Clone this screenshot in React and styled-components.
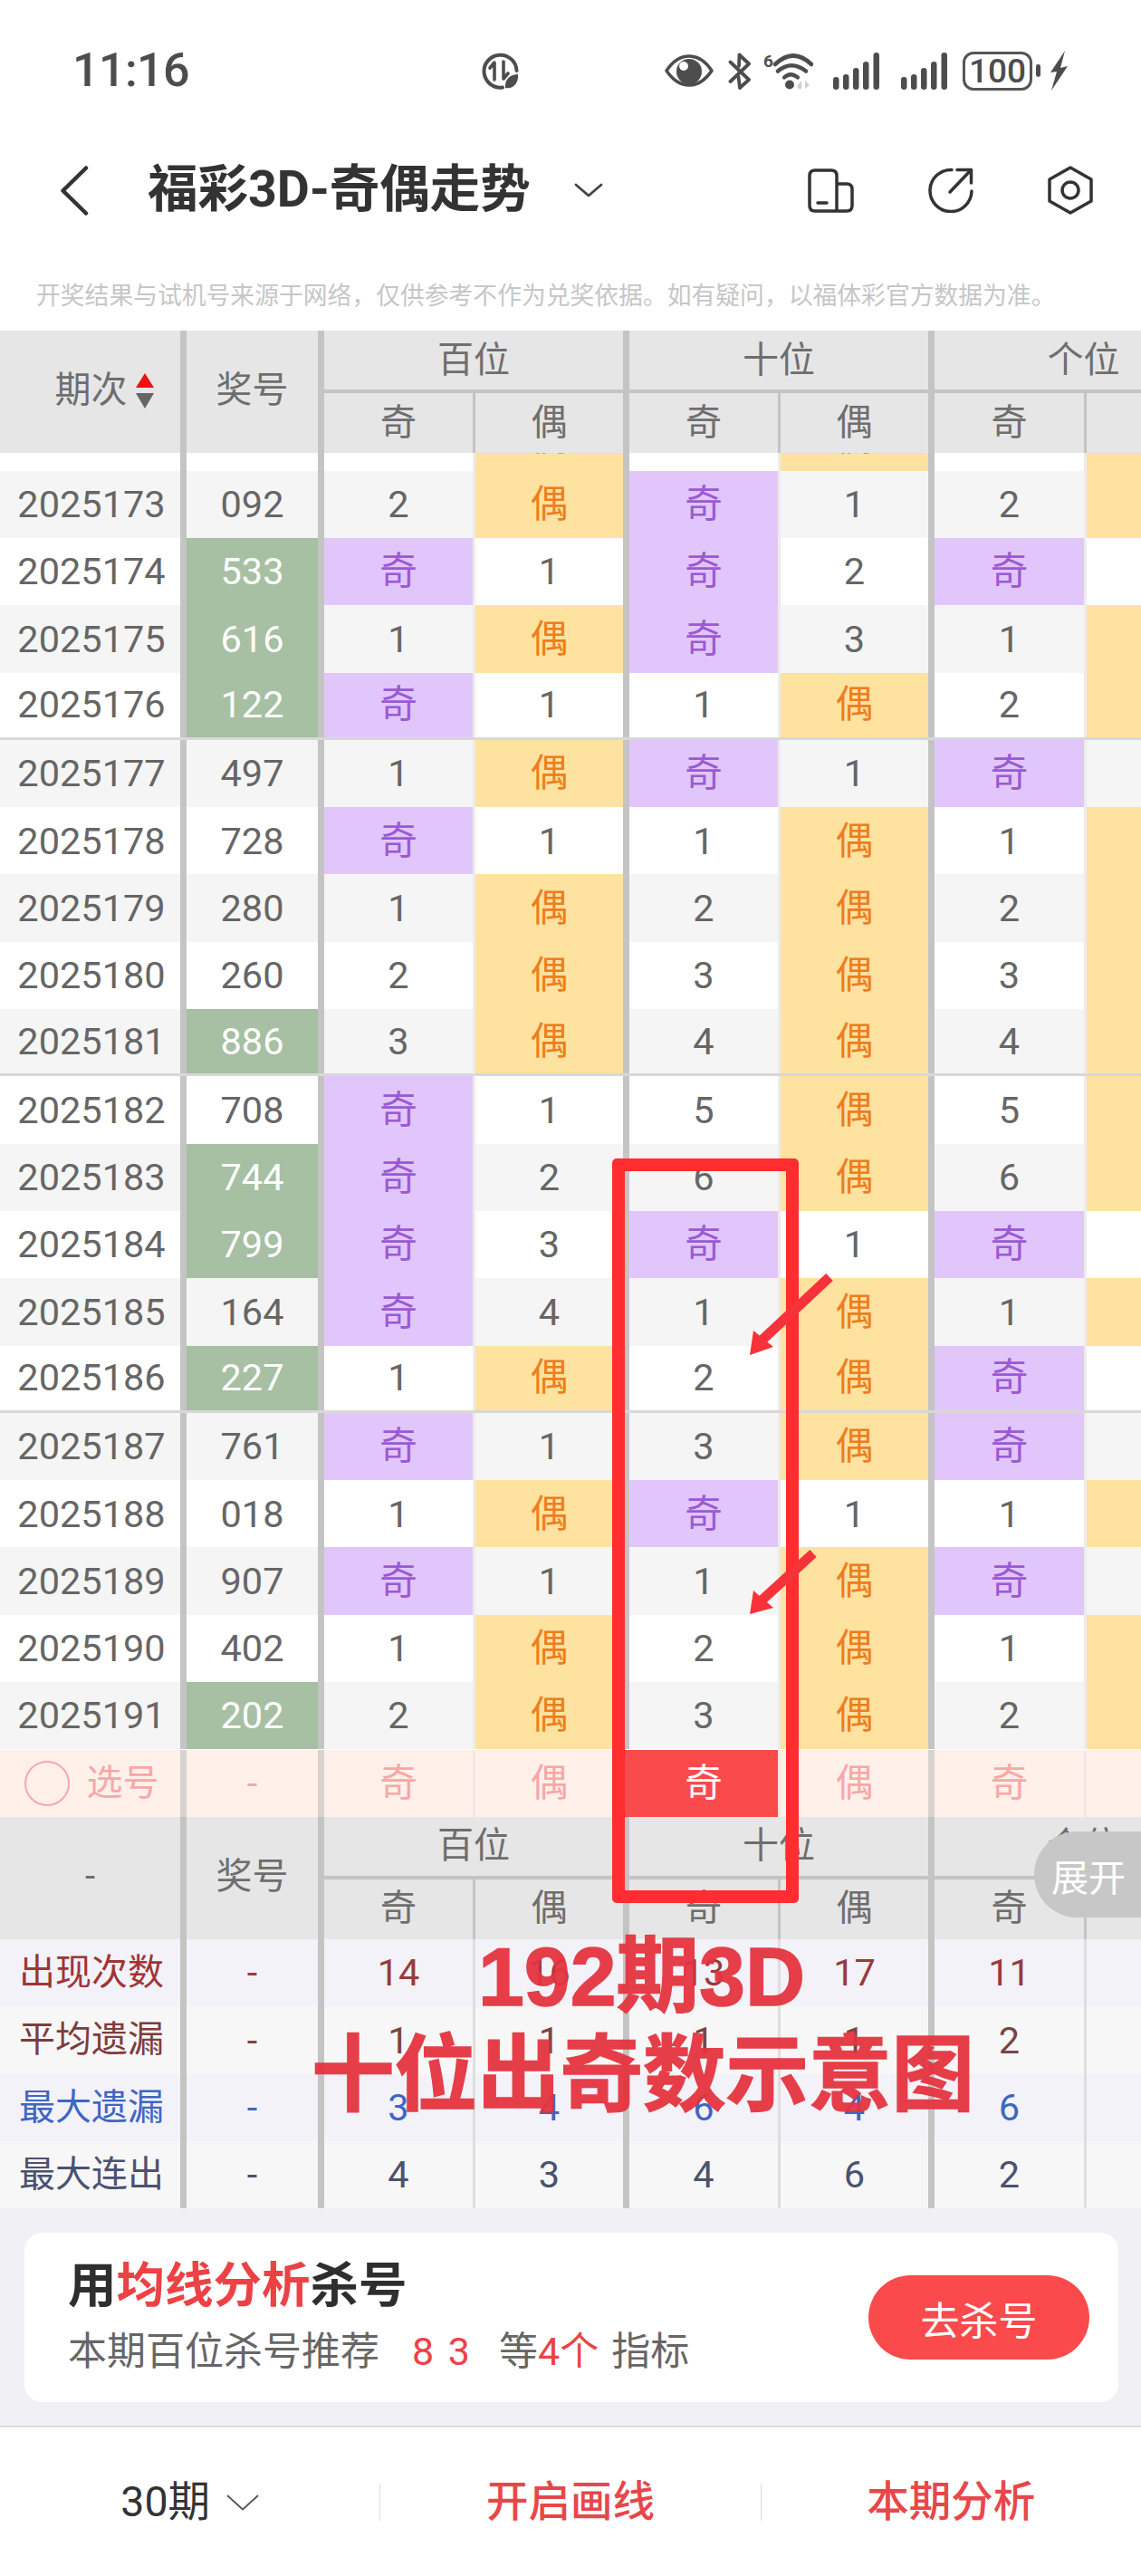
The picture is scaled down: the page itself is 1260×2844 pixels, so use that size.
import React from "react";
import styled, { createGlobalStyle, css } from "styled-components";

const FONT = `Roboto, "Noto Sans CJK SC", sans-serif`;
const THICK = "#c4c4c4";

const Global = createGlobalStyle`
  html, body { margin: 0; padding: 0; background: #fff; }
  * { box-sizing: border-box; }
`;

const Page = styled.div`
  position: relative;
  width: 1260px;
  height: 2844px;
  overflow: hidden;
  background: #fff;
  font-family: ${FONT};
`;

/* status bar */
const StatusBar = styled.div`
  height: 156px;
  display: flex;
  align-items: center;
  padding: 0 81px 0 80px;
  color: #4d4d4d;
`;
const Time = styled.div`
  width: 127px;
  font-size: 52px;
  line-height: 1;
  font-weight: 500;
  letter-spacing: -0.6px;
  white-space: nowrap;
`;
const EcoSlot = styled.div`
  margin-left: 325px;
  display: flex;
`;
const StatusIcons = styled.div`
  margin-left: auto;
  display: flex;
  align-items: center;
`;
const StatusSvg = styled.svg`
  display: block;
  flex: none;
  margin-left: ${(p) => p.$gap || 0}px;
`;
const Battery = styled.div`
  width: 77px;
  height: 43px;
  margin-left: 17px;
  border: 3.5px solid #555;
  border-radius: 12px;
  display: flex;
  align-items: center;
  justify-content: center;
  font-size: 37px;
  font-weight: 500;
  line-height: 1;
  color: #4d4d4d;
`;

/* nav */
const NavBar = styled.div`
  height: 108px;
  display: flex;
  align-items: center;
  padding: 0 53px 0 66px;
`;
const Title = styled.h1`
  margin: 0 0 0 65px;
  font-size: 55.5px;
  line-height: 1;
  font-weight: 700;
  color: #333;
  white-space: nowrap;
`;
const NavActions = styled.div`
  margin-left: auto;
  display: flex;
  align-items: center;
  gap: 82px;
`;
const Line = styled.svg`
  display: block;
  flex: none;
  fill: none;
  stroke: ${(p) => p.$color || "#333"};
  stroke-width: ${(p) => p.$w || 3.5}px;
  stroke-linecap: round;
  stroke-linejoin: round;
  margin-left: ${(p) => p.$gap || 0}px;
`;

const Notice = styled.div`
  height: 101px;
  padding: 26px 0 0 40px;
  font-size: 26.8px;
  line-height: 75px;
  color: #c6c6c6;
  white-space: nowrap;
`;

/* table */
const columns = css`
  display: grid;
  grid-template-columns: 199px 152px 171px 166px 171px 166px 172px 164px;
  width: 1361px;
`;
const HeadGrid = styled.div`
  ${columns}
  grid-template-rows: 69px 66px;
  background: #e6e6e6;
  color: #6e6e6e;
  font-size: 40px;
  line-height: 1;
`;
const centered = css`
  display: flex;
  align-items: center;
  justify-content: center;
`;
const HeadTall = styled.div`
  ${centered}
  grid-row: span 2;
  border-left: ${(p) => (p.$first ? 0 : 7)}px solid ${THICK};
  padding-bottom: 3px;
  padding-left: ${(p) => p.$inset || 0}px;
`;
const SortIcon = styled.svg`
  display: block;
  margin-left: 9px;
`;
const HeadGroup = styled.div`
  ${centered}
  grid-column: span 2;
  border-left: 7px solid ${THICK};
  border-bottom: 4px solid ${THICK};
`;
const HeadSub = styled.div`
  ${centered}
  border-left: ${(p) => (p.$thin ? "3px" : "7px")} solid ${THICK};
  padding-bottom: 1px;
`;

const Scroller = styled.div`
  height: 1431.7px;
  overflow: hidden;
`;
const Row = styled.div`
  ${columns}
  height: 74.3px;
  margin-top: ${(p) => p.$offset || 0}px;
  background: ${(p) => p.$bg};
  ${(p) => p.$rule && "border-bottom: 3px solid #d8d8d8;"}
`;
const toneBg = { plain: "transparent", odd: "#e1c6fb", even: "#fde2a0", num: "#a7bfa3", hit: "#f94a4c" };
const toneFg = { plain: "#666", odd: "#9b59d3", even: "#ee7d1e", num: "#fff", hit: "#fff" };
const Cell = styled.div`
  ${centered}
  font-size: 41.5px;
  line-height: 1;
  border-left: ${(p) => (p.$first ? "0" : p.$thin ? "3px" : "7px")} solid
    ${(p) => (p.$tone === "hit" ? toneBg.hit : p.$thin ? "#ececec" : THICK)};
  background: ${(p) => toneBg[p.$tone || "plain"]};
  background-clip: padding-box;
  color: ${(p) => toneFg[p.$tone || "plain"]};
  ${(p) => p.$first && "padding-left: 3px;"}
`;
const PickRow = styled(Row)`
  background: #fff0ea;
`;
const PickCell = styled(Cell)`
  color: ${(p) => (p.$tone === "hit" ? "#fff" : "#f8a7a7")};
  border-left-color: ${(p) => (p.$tone === "hit" ? toneBg.hit : p.$thin ? "#f1e6e2" : "#d9d3d0")};
`;
const PickRing = styled.span`
  width: 50px;
  height: 50px;
  border: 2.5px solid #f8a7a7;
  border-radius: 50%;
  margin-right: 19px;
  flex: none;
`;
const PickLabel = styled.span`
  font-size: 40px;
`;

const StatCell = styled(Cell)`
  color: ${(p) => p.$color};
  border-left-color: ${(p) => (p.$thin ? "#dedede" : THICK)};
  ${(p) => p.$first && "padding-left: 3px; font-size: 40px;"}
`;

/* promo */
const PromoBand = styled.div`
  height: 242px;
  padding: 27px 25px 0 27px;
  background: #f1f1f5;
  border-bottom: 2px solid #dcdcdc;
`;
const PromoCard = styled.div`
  height: 187px;
  border-radius: 20px;
  background: #fff;
  display: flex;
  align-items: center;
  justify-content: space-between;
  padding: 0 32px 0 48px;
`;
const PromoTitle = styled.div`
  font-size: 53.5px;
  line-height: 60px;
  font-weight: 700;
  color: #2e2e2e;
  white-space: nowrap;
  margin-top: -3px;
`;
const PromoText = styled.div`
  margin-top: 17px;
  font-size: 43px;
  line-height: 50px;
  color: #666;
  white-space: nowrap;
`;
const Red = styled.span`
  color: #ec4246;
  margin-left: ${(p) => p.$gap || 0}px;
  word-spacing: 5px;
`;
const Gap = styled.span`
  margin-left: ${(p) => p.$gap || 0}px;
`;
const PromoButton = styled.button`
  width: 244px;
  height: 93px;
  border: 0;
  border-radius: 47px;
  background: #fa4a4c;
  color: #fff;
  font-family: ${FONT};
  font-size: 43px;
  padding: 0;
`;

/* tab bar */
const TabBar = styled.div`
  height: 165px;
  display: flex;
  align-items: center;
`;
const Tab = styled.div`
  flex: 1;
  ${centered}
  font-size: 46.5px;
  line-height: 1;
  font-weight: ${(p) => (p.$red ? 500 : 400)};
  color: ${(p) => (p.$red ? "#e8474a" : "#333")};
`;
const TabRule = styled.div`
  width: 1px;
  height: 41px;
  background: #ddd;
  flex: none;
`;

/* things lying over the page */
const Frame = styled.div`
  position: absolute;
  left: 676px;
  top: 1279px;
  width: 206px;
  height: 822px;
  border: 14.5px solid #ff2d30;
  border-radius: 5px;
`;
const Pointer = styled.svg`
  position: absolute;
  left: ${(p) => p.$x}px;
  top: ${(p) => p.$y}px;
`;
const Caption = styled.div`
  position: absolute;
  left: 344px;
  top: 2128px;
  width: 729px;
  text-align: center;
  color: #e5333f;
  opacity: 0.94;
  font-family: "Liberation Sans", "Noto Sans CJK SC", sans-serif;
  font-weight: 700;
  font-size: 91.5px;
  line-height: 109px;
  white-space: nowrap;
  -webkit-text-stroke: 1.5px #e5333f;
`;
const ExpandTab = styled.div`
  position: absolute;
  right: 0;
  top: 2022px;
  width: 118px;
  height: 95px;
  padding-left: 19px;
  display: flex;
  align-items: center;
  background: #c7c7c7;
  border-radius: 48px 0 0 48px;
  color: #fff;
  font-size: 41px;
`;

const rows = [
  ["2025173", "092", 0, "2", "偶", "奇", "1", "2", "偶"],
  ["2025174", "533", 1, "奇", "1", "奇", "2", "奇", "1"],
  ["2025175", "616", 1, "1", "偶", "奇", "3", "1", "偶"],
  ["2025176", "122", 1, "奇", "1", "1", "偶", "2", "偶"],
  ["2025177", "497", 0, "1", "偶", "奇", "1", "奇", "1"],
  ["2025178", "728", 0, "奇", "1", "1", "偶", "1", "偶"],
  ["2025179", "280", 0, "1", "偶", "2", "偶", "2", "偶"],
  ["2025180", "260", 0, "2", "偶", "3", "偶", "3", "偶"],
  ["2025181", "886", 1, "3", "偶", "4", "偶", "4", "偶"],
  ["2025182", "708", 0, "奇", "1", "5", "偶", "5", "偶"],
  ["2025183", "744", 1, "奇", "2", "6", "偶", "6", "偶"],
  ["2025184", "799", 1, "奇", "3", "奇", "1", "奇", "1"],
  ["2025185", "164", 0, "奇", "4", "1", "偶", "1", "偶"],
  ["2025186", "227", 1, "1", "偶", "2", "偶", "奇", "1"],
  ["2025187", "761", 0, "奇", "1", "3", "偶", "奇", "1"],
  ["2025188", "018", 0, "1", "偶", "奇", "1", "1", "偶"],
  ["2025189", "907", 0, "奇", "1", "1", "偶", "奇", "1"],
  ["2025190", "402", 0, "1", "偶", "2", "偶", "1", "偶"],
  ["2025191", "202", 1, "2", "偶", "3", "偶", "2", "偶"],
];

const stats = [
  ["出现次数", "#a03434", ["14", "16", "13", "17", "11", "19"], "#9a3a3a"],
  ["平均遗漏", "#7d3c3c", ["1", "1", "1", "1", "2", "1"], "#7a4444"],
  ["最大遗漏", "#3e66c4", ["3", "4", "6", "4", "6", "4"], "#3e66c4"],
  ["最大连出", "#4a5270", ["4", "3", "4", "6", "2", "3"], "#4a5270"],
];

const toneOf = (v) => (v === "奇" ? "odd" : v === "偶" ? "even" : "plain");
const marks = ["奇", "偶", "奇", "偶", "奇", "偶"];

function Head({ first, sort }) {
  return (
    <HeadGrid>
      <HeadTall $first $inset={sort ? 31 : 0}>
        {first}
        {sort && (
          <SortIcon width="20" height="39" viewBox="0 0 20 39">
            <path d="M10 0 L20 16 H0 Z" fill="#f01010" />
            <path d="M0 22 H20 L10 39 Z" fill="#666" />
          </SortIcon>
        )}
      </HeadTall>
      <HeadTall>奖号</HeadTall>
      <HeadGroup>百位</HeadGroup>
      <HeadGroup>十位</HeadGroup>
      <HeadGroup>个位</HeadGroup>
      {marks.map((m, i) => (
        <HeadSub key={i} $thin={i % 2 === 1}>
          {m}
        </HeadSub>
      ))}
    </HeadGrid>
  );
}

function DataRow({ data, index, offset, rule }) {
  const [period, num, green, ...vals] = data;
  return (
    <Row $bg={index % 2 === 0 ? "#f5f5f5" : "#fff"} $rule={rule} $offset={offset}>
      <Cell $first>{period}</Cell>
      <Cell $tone={green ? "num" : "plain"}>{num}</Cell>
      {vals.map((v, i) => (
        <Cell key={i} $thin={i % 2 === 1} $tone={toneOf(v)}>
          {v}
        </Cell>
      ))}
    </Row>
  );
}

const Signal = ({ gap }) => (
  <StatusSvg $gap={gap} width="51" height="41" viewBox="0 0 51 41" fill="#4d4d4d">
    <rect x="0" y="27" width="6.5" height="14" rx="3.2" />
    <rect x="11" y="24" width="6.5" height="17" rx="3.2" />
    <rect x="22" y="17" width="6.5" height="24" rx="3.2" />
    <rect x="33" y="10" width="6.5" height="31" rx="3.2" />
    <rect x="44.5" y="0" width="6.5" height="41" rx="3.2" />
  </StatusSvg>
);

export default function App() {
  return (
    <Page>
      <Global />
      <StatusBar>
        <Time>11:16</Time>
        <EcoSlot>
          <Line width="41" height="41" viewBox="0 0 41 41" $color="#4d4d4d" $w={4}>
            <path d="M23 38.5 A18 18 0 1 1 38.5 20" />
            <path d="M14 30 V11 L9 17" strokeWidth="3.6" />
            <path d="M24 10 V29 L29 23" strokeWidth="3.6" />
            <path d="M26 39 C25 29 32 24 40 24 C41 33 35 41 26 39 Z" fill="#4d4d4d" stroke="none" />
          </Line>
        </EcoSlot>
        <StatusIcons>
          <StatusSvg width="54" height="36" viewBox="0 0 54 36">
            <path d="M2 18 C10 6 18 2 27 2 S44 6 52 18 C44 30 36 34 27 34 S10 30 2 18 Z" fill="#fff" stroke="#4d4d4d" strokeWidth="3.5" strokeLinejoin="round" />
            <circle cx="27" cy="19" r="14" fill="#4d4d4d" />
            <circle cx="21" cy="13" r="5" fill="#fff" />
          </StatusSvg>
          <Line $gap={16} width="25" height="41" viewBox="0 0 25 41" $color="#4d4d4d" $w={3.8}>
            <path d="M12 15 L12.5 2.5 L23 12.5 L2.5 32" />
            <path d="M2.5 10.5 L23 30 L13 39 L11.5 27" />
          </Line>
          <StatusSvg $gap={14} width="55" height="41" viewBox="0 0 55 41" fill="none">
            <text x="0" y="16" fontSize="19" fontWeight="700" fontFamily="Roboto, sans-serif" fill="#4d4d4d">6</text>
            <path d="M13 13 Q33 -6 53 13" stroke="#4d4d4d" strokeWidth="4.6" strokeLinecap="round" />
            <path d="M16 20.5 Q31 8 47 20.5" stroke="#4d4d4d" strokeWidth="4.6" strokeLinecap="round" />
            <path d="M23 27.5 Q30 21 38 27.5" stroke="#4d4d4d" strokeWidth="4.2" strokeLinecap="round" />
            <circle cx="29" cy="35.5" r="5" fill="#4d4d4d" />
            <path d="M37 37 L42 31 V40 H39 Z M46 31 L51 36 L46 40 Z" fill="#cfcfcf" />
          </StatusSvg>
          <Signal gap={22} />
          <Signal gap={24} />
          <Battery>100</Battery>
          <StatusSvg $gap={4} width="5" height="14" viewBox="0 0 5 14">
            <rect width="5" height="14" rx="2.4" fill="#4d4d4d" />
          </StatusSvg>
          <StatusSvg $gap={10} width="20" height="44" viewBox="0 0 20 44">
            <path d="M17 0 L1 24 L8 23 L2 44 L20 17 L12 19 Z" fill="#4d4d4d" />
          </StatusSvg>
        </StatusIcons>
      </StatusBar>

      <NavBar>
        <Line width="32" height="55" viewBox="0 0 32 55" $w={4.5}>
          <path d="M29 2.5 L3.5 27.5 L29 52.5" />
        </Line>
        <Title>福彩3D-奇偶走势</Title>
        <Line $gap={48} width="32" height="16" viewBox="0 0 32 16" $w={2.8} $color="#444">
          <path d="M2 2 L16 14 L30 2" />
        </Line>
        <NavActions>
          <Line width="51" height="49" viewBox="0 0 51 49">
            <path d="M32 45 V8 Q32 2 26 2 H8 Q2 2 2 8 V41 Q2 47 8 47 H43 Q49 47 49 41 V23 Q49 17 43 17 H32" />
            <path d="M11 38 H21" />
          </Line>
          <Line width="50" height="50" viewBox="0 0 50 50">
            <path d="M26 2.5 A23 23 0 1 0 48 26" />
            <path d="M24 27 L47 3" />
            <path d="M32 2.5 H47.5 V17" />
          </Line>
          <Line width="50" height="54" viewBox="0 0 50 54">
            <path d="M25 2 L48 15 V39 L25 52 L2 39 V15 Z" />
            <circle cx="25" cy="27" r="9" />
          </Line>
        </NavActions>
      </NavBar>

      <Notice>开奖结果与试机号来源于网络，仅供参考不作为兑奖依据。如有疑问，以福体彩官方数据为准。</Notice>

      <Head first="期次" sort />

      <Scroller>
        <DataRow
          data={["2025172", "531", 0, "3", "偶", "4", "偶", "1", "偶"]}
          index={1}
          offset={-54.6}
        />
        {rows.map((r, i) => (
          <DataRow key={r[0]} data={r} index={i} rule={i === 3 || i === 8 || i === 13} />
        ))}
      </Scroller>

      <PickRow>
        <PickCell $first>
          <PickRing />
          <PickLabel>选号</PickLabel>
        </PickCell>
        <PickCell>-</PickCell>
        {marks.map((m, i) => (
          <PickCell key={i} $thin={i % 2 === 1} $tone={i === 2 ? "hit" : "plain"}>
            {m}
          </PickCell>
        ))}
      </PickRow>

      <Head first="-" />

      {stats.map(([label, labelColor, values, valueColor], i) => (
        <Row key={label} $bg={i % 2 === 0 ? "#f2f2f8" : "#f7f7f7"}>
          <StatCell $first $color={labelColor}>{label}</StatCell>
          <StatCell $color={valueColor}>-</StatCell>
          {values.map((v, k) => (
            <StatCell key={k} $thin={k % 2 === 1} $color={valueColor}>
              {v}
            </StatCell>
          ))}
        </Row>
      ))}

      <PromoBand>
        <PromoCard>
          <div>
            <PromoTitle>
              用<Red>均线分析</Red>杀号
            </PromoTitle>
            <PromoText>
              本期百位杀号推荐<Red $gap={36}>8 3</Red>
              <Gap $gap={32}>等</Gap>
              <Red>4个</Red>
              <Gap $gap={14}>指标</Gap>
            </PromoText>
          </div>
          <PromoButton>去杀号</PromoButton>
        </PromoCard>
      </PromoBand>

      <TabBar>
        <Tab>
          30期
          <Line $gap={18} width="36" height="18" viewBox="0 0 36 18" $w={1.8} $color="#555">
            <path d="M1.5 1.5 L18 16.5 L34.5 1.5" />
          </Line>
        </Tab>
        <TabRule />
        <Tab $red>开启画线</Tab>
        <TabRule />
        <Tab $red>本期分析</Tab>
      </TabBar>

      <ExpandTab>展开</ExpandTab>
      <Frame />
      <Pointer $x={820} $y={1400} width="105" height="100" viewBox="0 0 105 100">
        <path d="M96 10 L22 79" stroke="#f8323a" strokeWidth="11" />
        <path d="M8 96 L34 87 L12 69 Z" fill="#f8323a" />
      </Pointer>
      <Pointer $x={820} $y={1705} width="85" height="85" viewBox="0 0 85 85">
        <path d="M78 10 L22 61" stroke="#f8323a" strokeWidth="11" />
        <path d="M8 77 L34 70 L12 51 Z" fill="#f8323a" />
      </Pointer>
      <Caption>
        192期3D
        <br />
        十位出奇数示意图
      </Caption>
    </Page>
  );
}
